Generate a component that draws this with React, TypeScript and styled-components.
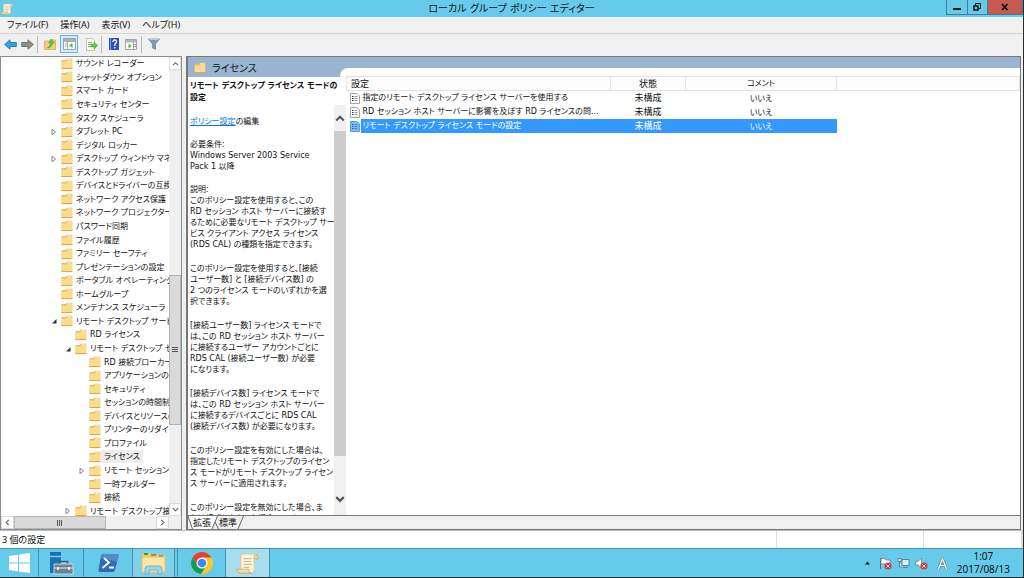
import React from "react";
import styled, { createGlobalStyle, css } from "styled-components";

const Global = createGlobalStyle`
  * { box-sizing: border-box; }
  html, body, #root { height: 100%; }
  body {
    margin: 0;
    overflow: hidden;
    background: #2b2b2b;
    color: #111;
    font: 8px/11px "DejaVu Sans", "Noto Sans CJK JP", sans-serif;
    font-feature-settings: "palt";
  }
  button, table { font: inherit; color: inherit; font-feature-settings: inherit; }
  button { border: 0; padding: 0; background: none; }
  svg { display: block; flex: none; }
`;

const wideFont = css`
  font-family: "Noto Sans", "Noto Sans CJK JP", sans-serif;
  font-size: 9px;
`;

const Desktop = styled.div`
  height: 100vh;
  display: flex;
  flex-direction: column;
  padding: 0 1px 1px 0;
`;

const TitleBar = styled.header`
  height: 17px;
  flex: none;
  display: grid;
  grid-template-columns: 77px 1fr 77px;
  background: #66cbea;
`;
const TitleIcon = styled.div`padding: 3px 1px;`;
const Title = styled.h1`
  margin: 0;
  font-size: 10px;
  line-height: 18px;
  font-weight: 400;
  text-align: center;
`;
const WindowButtons = styled.div`
  display: flex;
  height: 15px;
  border: 1px solid #3e7f96;
  border-top: 0;
`;
const WindowButton = styled.button<{ $close?: boolean }>`
  flex: ${(p) => (p.$close ? "0 0 34px" : "1")};
  display: grid;
  place-items: center;
  background: ${(p) => (p.$close ? "#c45a52" : "transparent")};
  border-right: ${(p) => (p.$close ? "0" : "1px solid #3e7f96")};
`;

const MenuBar = styled.nav`
  height: 17px;
  flex: none;
  display: flex;
  gap: 12px;
  padding: 0 7px;
  background: #f0f0f0;
  border-bottom: 1px solid #d5d5d5;
`;
const MenuButton = styled.button`
  ${wideFont}
  line-height: 16px;
`;

const ToolBar = styled.div`
  height: 22px;
  flex: none;
  display: flex;
  align-items: center;
  gap: 3px;
  padding: 0 3px 2px;
  background: #f0f0f0;
`;
const ToolButton = styled.button<{ $active?: boolean }>`
  width: ${(p) => (p.$active ? "18px" : "14px")};
  height: 18px;
  display: grid;
  place-items: center;
  ${(p) =>
    p.$active &&
    css`
      margin-right: 3px;
      background: #d3ebfa;
      outline: 1px solid #69b4e3;
      outline-offset: -1px;
    `}
`;
const ToolDivider = styled.span`
  width: 1px;
  height: 17px;
  margin-right: 2px;
  background: #b9b9b9;
`;

const Main = styled.main`
  flex: 1;
  min-height: 0;
  display: flex;
  gap: 4px;
  padding-right: 2px;
  background: #f0f0f0;
`;
const TreePane = styled.section`
  width: 182px;
  flex: none;
  display: grid;
  grid-template-columns: 1fr 12px;
  grid-template-rows: 1fr 13px;
  border: 1px solid #8c8e94;
  background: #f0f0f0;
`;
const TreeView = styled.div`
  min-height: 0;
  overflow: hidden;
  background: #fff;
`;
const TreeList = styled.ul`
  height: 461px;
  margin: 0;
  padding: 0;
  list-style: none;
  display: grid;
  grid-auto-rows: 1fr;
`;
const TreeItem = styled.li<{ $level: number }>`
  display: flex;
  align-items: center;
  padding-left: ${(p) => 35 + p.$level * 14}px;
  white-space: nowrap;
`;
const Expander = styled.span`
  width: 11px;
  flex: none;
  padding-left: 1px;
`;
const TreeLabel = styled.span<{ $selected?: boolean }>`
  padding: 0 3px;
  line-height: 13px;
  background: ${(p) => (p.$selected ? "#ededed" : "transparent")};
`;

const ScrollBar = styled.div<{ $horizontal?: boolean }>`
  min-height: 0;
  display: flex;
  flex-direction: ${(p) => (p.$horizontal ? "row" : "column")};
  background: #f0f0f0;
`;
const ScrollButton = styled.button`
  flex: 0 0 13px;
  display: grid;
  place-items: center;
  background: #fff;
  border: 1px solid #dcdcdc;
`;
const ScrollSpace = styled.div<{ $grow: number }>`flex: ${(p) => p.$grow} 1 0;`;
const ScrollThumb = styled.div<{ $grow: number }>`
  flex: ${(p) => p.$grow} 1 0;
  display: grid;
  place-items: center;
  background: #dadada;
  border: 1px solid #b5b5b5;
`;

const ResultPane = styled.section`
  flex: 1;
  min-width: 0;
  display: flex;
  flex-direction: column;
  border: 1px solid #777;
  border-width: 1px 1px 1px 2px;
  background: #fff;
`;
const ResultBody = styled.div`
  flex: 1;
  min-height: 0;
  display: grid;
  grid-template-columns: 152px 6px 1fr;
  grid-template-rows: 11px 9px 1fr;
  background: linear-gradient(#99b4d1 20px, #fff 20px);
`;
const PaneHeading = styled.h2`
  grid-column: 1;
  grid-row: 1 / 3;
  display: flex;
  align-items: center;
  gap: 6px;
  margin: 0;
  padding: 2px 0 0 6px;
  font-size: 10px;
  font-weight: 400;
`;
const Curve = styled.div`
  grid-column: 2 / 4;
  grid-row: 2;
  border-top-left-radius: 8px;
  background: #fff;
`;
const ListPane = styled.div`
  grid-column: 3;
  grid-row: 2 / 4;
  min-width: 0;
  padding-top: 8px;
`;
const Detail = styled.article`
  grid-column: 1 / 3;
  grid-row: 3;
  min-height: 0;
  display: flex;
  flex-direction: column;
`;
const DetailTitle = styled.h3`
  margin: 0;
  padding: 3px 0 1px 2px;
  font-size: 8px;
  line-height: 12px;
  font-weight: 700;
  white-space: nowrap;
`;
const DetailBody = styled.div`
  flex: 1;
  min-height: 0;
  display: grid;
  grid-template-columns: 1fr 12px;
`;
const DetailText = styled.div`
  min-height: 0;
  padding: 11px 0 0 2px;
  overflow: hidden;
  white-space: nowrap;
`;
const Paragraph = styled.p<{ $gap: number }>`
  margin: 0 0 ${(p) => p.$gap}px;
`;
const Link = styled.a`
  color: #0078d7;
`;
const FlatScroll = styled.div`
  display: flex;
  flex-direction: column;
  background: #f0f0f0;
`;
const FlatScrollButton = styled.button<{ $size: number }>`
  flex: 0 0 ${(p) => p.$size}px;
  display: grid;
  place-items: center;
`;
const FlatThumb = styled.div`
  flex: 324 1 0;
  background: #cdcdcd;
`;

const Table = styled.table`
  width: 100%;
  border-collapse: collapse;
  table-layout: fixed;
`;
const HeadCell = styled.th<{ $left?: boolean }>`
  height: 14px;
  padding: 0 4px;
  border: 1px solid #e3e3e3;
  background: #fcfcfc;
  font-weight: 400;
  text-align: ${(p) => (p.$left ? "left" : "center")};
`;
const Wide = styled.span`
  ${wideFont}
`;
const Row = styled.tr<{ $selected?: boolean }>`
  height: 14px;
  color: ${(p) => (p.$selected ? "#fff" : "inherit")};
`;
const Cell = styled.td<{ $selected?: boolean }>`
  padding: 0;
  text-align: center;
  background: ${(p) => (p.$selected ? "#3399ff" : "transparent")};
`;
const NameCell = styled.td`
  padding: 0 0 0 3px;
`;
const NameBox = styled.div`
  display: flex;
  align-items: center;
  gap: 1px;
`;
const NameText = styled.span<{ $selected?: boolean }>`
  flex: 1;
  padding-left: 2px;
  line-height: 14px;
  white-space: nowrap;
  background: ${(p) => (p.$selected ? "#3399ff" : "transparent")};
`;

const Tabs = styled.div`
  height: 14px;
  flex: none;
  display: flex;
  border-top: 1px solid #777;
  background: #f0f0f0;
`;
const Tab = styled.button<{ $active?: boolean }>`
  ${wideFont}
  line-height: 14px;
  background: ${(p) => (p.$active ? "#fff" : "transparent")};
`;

const StatusBar = styled.footer`
  ${wideFont}
  height: 18px;
  flex: none;
  display: grid;
  grid-template-columns: 1fr 147px 97px;
  border-top: 1px solid #bbb;
  border-right: 2px solid #ddd;
  background: #fff;
  line-height: 17px;
`;
const StatusCell = styled.div`
  padding-left: 2px;
  border-right: 1px solid #ddd;
`;

const TaskBar = styled.footer`
  height: 29px;
  flex: none;
  display: flex;
  border-top: 1px solid #4796b0;
  background: #66cbea;
`;
const TaskButton = styled.button<{ $width: number; $shade?: string }>`
  width: ${(p) => p.$width}px;
  display: grid;
  place-items: center;
  border-right: 1px solid #4391ab;
  background: ${(p) => p.$shade ?? "transparent"};
`;
const TaskEdge = styled.span`
  width: 3px;
  border-right: 1px solid #4391ab;
`;
const Tray = styled.div`
  margin-left: auto;
  display: flex;
  align-items: center;
  gap: 5px;
  padding-right: 13px;
`;
const TrayButton = styled.button<{ $spaced?: boolean }>`
  margin: 0 ${(p) => (p.$spaced ? "4px" : "0")};
`;
const Clock = styled.time`
  ${wideFont}
  text-align: center;
  font-size: 10px;
  line-height: 13px;
`;

const Folder = ({ size = 12 }: { size?: number }) => (
  <svg width={size} height={size} viewBox="0 0 12 12">
    <path d="M.5 2h4l1-1.3h5.8V11H.5z" fill="#e9bd5e" />
    <path d="M6 1.4h4.6v1.2H6z" fill="#fff6d8" />
    <path d="M.9 3.4h4.6l1-.8h4.6v8H.9z" fill="#fbdc8d" />
    <path d="M.5 10.6h10.8" stroke="#d9a743" />
  </svg>
);

const Chevron = ({ dir, heavy }: { dir: "up" | "down" | "left" | "right"; heavy?: boolean }) => {
  const d = { up: "M1 6l3-3 3 3", down: "M1 2.500l3 3 3-3", left: "M5.500 1l-3 3 3 3", right: "M2.500 1l3 3-3 3" }[dir];
  const s = heavy ? 10 : 7;
  return (
    <svg width={s} height={s} viewBox="0 0 8 8" fill="none" stroke="#555" strokeWidth={heavy ? 1.7 : 1.2}>
      <path d={d} />
    </svg>
  );
};

const Scroll = ({ size = 12 }: { size?: number }) => (
  <svg width={size} height={size} viewBox="0 0 24 24">
    <path d="M6 2h14q3 0 3 3v2h-4v12q0 3-3 3H3q-2-1-2-4h4V5q0-2 1-3z" fill="#fbf3d8" stroke="#d6c594" />
    <path d="M19 7V4q1-2 3-1l1 4zM1 18h12q0 3 3 4H4q-3-1-3-4z" fill="#ecdcae" stroke="#c7b27a" />
    <path d="M8 7h8M8 10h8M8 13h8M8 16h6" stroke="#c4b588" />
  </svg>
);

const PolicyIcon = ({ selected }: { selected?: boolean }) => (
  <svg width="10" height="11" viewBox="0 0 10 11">
    <path d="M.5.5h6.500l2.500 2.500v7.500h-9z" fill={selected ? "#7cbcf5" : "#fafafa"} stroke={selected ? "#5a9bd8" : "#a5a5a5"} />
    <path d="M2 3.500h1.500M2 5.500h1.500M2 7.500h1.500" stroke={selected ? "#1c60a8" : "#333"} />
    <path d="M4.500 3.500h3M4.500 5.500h3M4.500 7.500h3" stroke={selected ? "#3f86cb" : "#999"} />
  </svg>
);

type Node = [label: string, level: number, state?: "closed" | "open" | "selected"];
const nodes: Node[] = [
  ["サウンド レコーダー", 1],
  ["シャットダウン オプション", 1],
  ["スマート カード", 1],
  ["セキュリティ センター", 1],
  ["タスク スケジューラ", 1],
  ["タブレット PC", 1, "closed"],
  ["デジタル ロッカー", 1],
  ["デスクトップ ウィンドウ マネージャー", 1, "closed"],
  ["デスクトップ ガジェット", 1],
  ["デバイスとドライバーの互換性", 1],
  ["ネットワーク アクセス保護", 1],
  ["ネットワーク プロジェクター", 1],
  ["パスワード同期", 1],
  ["ファイル履歴", 1],
  ["ファミリー セーフティ", 1],
  ["プレゼンテーションの設定", 1],
  ["ポータブル オペレーティング システム", 1],
  ["ホームグループ", 1],
  ["メンテナンス スケジューラ", 1],
  ["リモート デスクトップ サービス", 1, "open"],
  ["RD ライセンス", 2],
  ["リモート デスクトップ セッション ホスト", 2, "open"],
  ["RD 接続ブローカー", 3],
  ["アプリケーションの互換性", 3],
  ["セキュリティ", 3],
  ["セッションの時間制限", 3],
  ["デバイスとリソースのリダイレクト", 3],
  ["プリンターのリダイレクト", 3],
  ["プロファイル", 3],
  ["ライセンス", 3, "selected"],
  ["リモート セッション環境", 3, "closed"],
  ["一時フォルダー", 3],
  ["接続", 3],
  ["リモート デスクトップ接続", 2, "closed"],
];

const paragraphs: string[][] = [
  ["このポリシー設定を使用すると、この", "RD セッション ホスト サーバーに接続す", "るために必要なリモート デスクトップ サー", "ビス クライアント アクセス ライセンス", "(RDS CAL) の種類を指定できます。"],
  ["このポリシー設定を使用すると、[接続", "ユーザー数] と [接続デバイス数] の", "2 つのライセンス モードのいずれかを選", "択できます。"],
  ["[接続ユーザー数] ライセンス モードで", "は、この RD セッション ホスト サーバー", "に接続するユーザー アカウントごとに", "RDS CAL (接続ユーザー数) が必要", "になります。"],
  ["[接続デバイス数] ライセンス モードで", "は、この RD セッション ホスト サーバー", "に接続するデバイスごとに RDS CAL", "(接続デバイス数) が必要になります。"],
  ["このポリシー設定を有効にした場合は、", "指定したリモート デスクトップのライセン", "ス モードがリモート デスクトップ ライセン", "ス サーバーに適用されます。"],
  ["このポリシー設定を無効にした場合、ま", "たは構成しなかった場合、ライセンス"],
];

const Lines = ({ lines }: { lines: string[] }) => (
  <>
    {lines.map((line, i) => (
      <React.Fragment key={line}>
        {i > 0 && <br />}
        {line}
      </React.Fragment>
    ))}
  </>
);

const policies = [
  "指定のリモート デスクトップ ライセンス サーバーを使用する",
  "RD セッション ホスト サーバーに影響を及ぼす RD ライセンスの問...",
  "リモート デスクトップ ライセンス モードの設定",
];

export default function App() {
  return (
    <Desktop>
      <Global />
      <TitleBar>
        <TitleIcon><Scroll /></TitleIcon>
        <Title>ローカル グループ ポリシー エディター</Title>
        <WindowButtons>
          <WindowButton aria-label="最小化">
            <svg width="8" height="8"><path d="M0 6h8" stroke="#111" strokeWidth="2" /></svg>
          </WindowButton>
          <WindowButton aria-label="元に戻す">
            <svg width="8" height="8" fill="none" stroke="#111"><path d="M2.500 2V.5h5v5H6" /><path d="M1 3h4v4H1z" strokeWidth="1.500" /></svg>
          </WindowButton>
          <WindowButton $close aria-label="閉じる">
            <svg width="8" height="8"><path d="M1 1l5.500 6M6.500 1L1 7" stroke="#111" strokeWidth="1.800" /></svg>
          </WindowButton>
        </WindowButtons>
      </TitleBar>
      <MenuBar>
        {["ファイル(F)", "操作(A)", "表示(V)", "ヘルプ(H)"].map((m) => <MenuButton key={m}>{m}</MenuButton>)}
      </MenuBar>
      <ToolBar>
        <ToolButton aria-label="戻る">
          <svg width="13" height="11" viewBox="0 0 13 11"><path d="M.7 5.500L6 .8v2.700h6.300v4H6v2.700z" fill="#35a5e5" stroke="#1e7fc0" /></svg>
        </ToolButton>
        <ToolButton aria-label="進む">
          <svg width="13" height="11" viewBox="0 0 13 11"><path d="M12.300 5.500L7 .8v2.700H.7v4H7v2.700z" fill="#909090" stroke="#737373" /></svg>
        </ToolButton>
        <ToolDivider />
        <ToolButton aria-label="上へ">
          <svg width="12" height="12" viewBox="0 0 12 12"><path d="M.5 3h4l1-1h6v9.500H.5z" fill="#f4cf78" stroke="#dcb765" /><path d="M3 10q3-1 3.500-5H4.500L7.500 1l3 4H8.500q-.5 5-5.500 5z" fill="#5cc24a" stroke="#3e9a32" strokeWidth=".5" /></svg>
        </ToolButton>
        <ToolButton $active aria-label="コンソール ツリーの表示">
          <svg width="13" height="12" viewBox="0 0 13 12"><path d="M.5.5h12v11H.5z" fill="#fff" stroke="#9aa6b2" /><path d="M1 1h11v3H1z" fill="#a5b0bb" /><path d="M4.500 4v7" stroke="#9aa6b2" /><path d="M2 6h1.500M2 8h1.500" stroke="#6f93b5" /><path d="M9.500 5v5L6 7.500z" fill="#4fb840" /></svg>
        </ToolButton>
        <ToolButton aria-label="一覧のエクスポート">
          <svg width="13" height="13" viewBox="0 0 13 13"><path d="M1.500.5h6l2 2v10h-8z" fill="#fffbe9" stroke="#c9c1a8" /><path d="M3 4.500h4M3 6.500h3M3 8.500h4" stroke="#999" /><path d="M6 6h3V4l3.700 3.500L9 11V9H6z" fill="#5cc94a" stroke="#46a83a" strokeWidth=".5" /></svg>
        </ToolButton>
        <ToolDivider />
        <ToolButton aria-label="ヘルプ">
          <svg width="10" height="12" viewBox="0 0 10 12"><path d="M0 0h10v12H0z" fill="#2c4fb8" /><path d="M1.500 0v12" stroke="#7b95e3" /><path d="M4 4q0-2 1.700-2 1.800 0 1.800 1.700Q7.500 5 5.800 6.200V8M5.800 9v1.400" stroke="#fff" strokeWidth="1.300" fill="none" /></svg>
        </ToolButton>
        <ToolButton aria-label="操作ウィンドウの表示">
          <svg width="12" height="11" viewBox="0 0 12 11"><path d="M.5.5h11v10H.5z" fill="#fff" stroke="#9ea5ac" /><path d="M1 1h10v2.500H1z" fill="#b0b6bc" /><path d="M8.500 3.500V10" stroke="#9ea5ac" /><path d="M9.500 5.500H11M9.500 7.500H11" stroke="#777" /><path d="M3.500 4.500v5l3-2.500z" fill="#4fb840" /></svg>
        </ToolButton>
        <ToolDivider />
        <ToolButton aria-label="フィルター">
          <svg width="12" height="12" viewBox="0 0 12 12"><path d="M.5 1h11L7.500 6v5.500l-3-1.500V6z" fill="#7f9bb3" stroke="#668199" strokeWidth=".7" /><path d="M1.500 1.500h9" stroke="#b9cbdb" /></svg>
        </ToolButton>
      </ToolBar>
      <Main>
        <TreePane>
          <TreeView>
            <TreeList>
              {nodes.map(([label, level, state]) => (
                <TreeItem key={label} $level={level}>
                  <Expander>
                    {state === "closed" && <svg width="6" height="8"><path d="M1 1.200v5.600L4.500 4z" fill="#fff" stroke="#777" strokeWidth=".9" /></svg>}
                    {state === "open" && <svg width="6" height="8"><path d="M5.500 2v4.500H1z" fill="#333" /></svg>}
                  </Expander>
                  <Folder />
                  <TreeLabel $selected={state === "selected"}>{label}</TreeLabel>
                </TreeItem>
              ))}
            </TreeList>
          </TreeView>
          <ScrollBar>
            <ScrollButton aria-label="上へスクロール"><Chevron dir="up" /></ScrollButton>
            <ScrollSpace $grow={206} />
            <ScrollThumb $grow={149}>
              <svg width="6" height="6"><path d="M0 .5h6M0 2.500h6M0 4.500h6" stroke="#555" /></svg>
            </ScrollThumb>
            <ScrollSpace $grow={78} />
            <ScrollButton aria-label="下へスクロール"><Chevron dir="down" /></ScrollButton>
          </ScrollBar>
          <ScrollBar $horizontal>
            <ScrollButton aria-label="左へスクロール"><Chevron dir="left" /></ScrollButton>
            <ScrollThumb $grow={91}>
              <svg width="6" height="6"><path d="M.5 0v6M2.500 0v6M4.500 0v6" stroke="#555" /></svg>
            </ScrollThumb>
            <ScrollSpace $grow={51} />
            <ScrollButton aria-label="右へスクロール"><Chevron dir="right" /></ScrollButton>
          </ScrollBar>
        </TreePane>
        <ResultPane>
          <ResultBody>
            <PaneHeading><Folder />ライセンス</PaneHeading>
            <Curve />
            <Detail>
              <DetailTitle><Lines lines={["リモート デスクトップ ライセンス モードの", "設定"]} /></DetailTitle>
              <DetailBody>
                <DetailText>
                  <Paragraph $gap={12}><Link href="#edit">ポリシー設定</Link>の編集</Paragraph>
                  <Paragraph $gap={12}><Lines lines={["必要条件:", "Windows Server 2003 Service", "Pack 1 以降"]} /></Paragraph>
                  <Paragraph $gap={0}>説明:</Paragraph>
                  {paragraphs.map((lines) => <Paragraph $gap={13} key={lines[0] + lines[1]}><Lines lines={lines} /></Paragraph>)}
                </DetailText>
                <FlatScroll>
                  <FlatScrollButton $size={26} aria-label="説明を上へ"><Chevron dir="up" heavy /></FlatScrollButton>
                  <FlatThumb />
                  <ScrollSpace $grow={27} />
                  <FlatScrollButton $size={32} aria-label="説明を下へ"><Chevron dir="down" heavy /></FlatScrollButton>
                </FlatScroll>
              </DetailBody>
            </Detail>
            <ListPane>
              <Table>
                <colgroup>
                  <col style={{ width: 264 }} />
                  <col style={{ width: 75 }} />
                  <col style={{ width: 151 }} />
                  <col />
                </colgroup>
                <thead>
                  <tr>
                    <HeadCell $left><Wide>設定</Wide></HeadCell>
                    <HeadCell><Wide>状態</Wide></HeadCell>
                    <HeadCell>コメント</HeadCell>
                    <HeadCell as="td" />
                  </tr>
                </thead>
                <tbody>
                  {policies.map((name, i) => {
                    const selected = i === 2;
                    return (
                      <Row key={name} $selected={selected}>
                        <NameCell>
                          <NameBox>
                            <PolicyIcon selected={selected} />
                            <NameText $selected={selected}>{name}</NameText>
                          </NameBox>
                        </NameCell>
                        <Cell $selected={selected}><Wide>未構成</Wide></Cell>
                        <Cell $selected={selected}>いいえ</Cell>
                        <td />
                      </Row>
                    );
                  })}
                </tbody>
              </Table>
            </ListPane>
          </ResultBody>
          <Tabs>
            <svg width="5" height="13"><path d="M0 0l5 13V0z" fill="#fff" /><path d="M0 0l4.500 13" stroke="#666" /></svg>
            <Tab $active>拡張</Tab>
            <svg width="8" height="13" fill="none"><path d="M0 0h6L1 13H0z" fill="#fff" /><path d="M6.500 0L1 13M4 6l3.500 7" stroke="#666" /></svg>
            <Tab>標準</Tab>
            <svg width="7" height="13"><path d="M6.500 0L1 13" stroke="#666" /></svg>
          </Tabs>
        </ResultPane>
      </Main>
      <StatusBar>
        <StatusCell>3 個の設定</StatusCell>
        <StatusCell />
        <div />
      </StatusBar>
      <TaskBar>
        <TaskButton $width={39} aria-label="スタート">
          <svg width="21" height="20" viewBox="0 0 21 20" fill="#fff"><path d="M0 3l9-1.300v7.800H0zM10 1.500L21 0v9.500H10zM0 10.500h9v7.800L0 17zM10 10.500h11V20l-11-1.500z" /></svg>
        </TaskButton>
        <TaskButton $width={45} aria-label="サーバー マネージャー">
          <svg width="26" height="24" viewBox="0 0 26 24"><path d="M2 1h11v21H2z" fill="#1672b8" /><path d="M2 5.500h11" stroke="#83c8ef" strokeWidth="1.500" /><path d="M11.500 13V10.500h8V13" fill="none" stroke="#485a66" strokeWidth="1.500" /><path d="M6 13h19v10H6z" fill="#6c8290" stroke="#dbe9f0" strokeWidth=".8" /><path d="M6 17h19" stroke="#dbe9f0" /><path d="M10 16v3M21 16v3" stroke="#fff" strokeWidth="1.500" /></svg>
        </TaskButton>
        <TaskButton $width={49} aria-label="PowerShell">
          <svg width="21" height="18" viewBox="0 0 21 18"><path d="M5 0h14q2 0 1.500 2L17 16q-.5 2-2.500 2H2q-2 0-1.500-2L3 2q.5-2 2-2z" fill="#2f6cae" /><path d="M5 0h14q2 0 1.500 2L19 8 3 4l.5-2Q4 0 5 0z" fill="#4f8dc6" /><path d="M6 4l5 4.500L4.500 14M11 13.500h5" fill="none" stroke="#fff" strokeWidth="1.800" /></svg>
        </TaskButton>
        <TaskButton $width={42} $shade="#7fd1ea" aria-label="エクスプローラー">
          <svg width="25" height="23" viewBox="0 0 25 23"><path d="M1 3q0-2 2-2h5l2 2h13q1 0 1 1v17H1z" fill="#efc969" /><path d="M3 2h4" stroke="#36a33c" strokeWidth="2" /><path d="M10 3h5M18 4h4" stroke="#d9533d" strokeWidth="1.500" /><path d="M1 5h23v15H1z" fill="#fae7a8" stroke="#e3c06a" /><path d="M4 22v-5q0-3 3-3h11q3 0 3 3v5h-4v-4H8v4z" fill="#9bd7ee" stroke="#6ab3d4" /></svg>
        </TaskButton>
        <TaskEdge />
        <TaskButton $width={48} aria-label="Chrome">
          <svg width="22" height="22" viewBox="0 0 22 22"><circle cx="11" cy="11" r="11" fill="#f8c928" /><path d="M1.500 5.500A11 11 0 0 1 20.500 5.500H11L6.500 13.500z" fill="#db4437" /><path d="M1.500 5.500A11 11 0 0 0 10 22l5.500-8.500H7z" fill="#169c58" /><circle cx="11" cy="11" r="5.500" fill="#fff" /><circle cx="11" cy="11" r="4.300" fill="#4285f4" /></svg>
        </TaskButton>
        <TaskButton $width={44} $shade="#a6def0" aria-label="ローカル グループ ポリシー エディター"><Scroll size={23} /></TaskButton>
        <Tray>
          <TrayButton $spaced aria-label="隠れているアイコン"><svg width="5" height="4"><path d="M0 3.500L2.500.5 5 3.500z" fill="#111" /></svg></TrayButton>
          <TrayButton aria-label="アクション センター">
            <svg width="13" height="13" viewBox="0 0 13 13"><path d="M1.500 1v11" stroke="#667" /><path d="M2 1.500h4l1 1.500h4v5H7L6 7H2z" fill="#fff" stroke="#778" strokeWidth=".8" /><circle cx="9" cy="9" r="3.600" fill="#d83b35" /><path d="M7.500 7.500l3 3M10.500 7.500l-3 3" stroke="#fff" /></svg>
          </TrayButton>
          <TrayButton aria-label="ネットワーク">
            <svg width="13" height="12" viewBox="0 0 13 12" fill="none" stroke="#667f8a"><path d="M5 2.500h7v6H5zM6 10.500h5" fill="#d7eef6" /><path d="M1 1.500h3v3H1zM2.500 5v5H5" fill="#eef8fb" /></svg>
          </TrayButton>
          <TrayButton aria-label="音量">
            <svg width="13" height="13" viewBox="0 0 13 13"><path d="M.5 4.500H3L6.500 1v10L3 8H.5z" fill="#fff" stroke="#778" strokeWidth=".8" /><circle cx="9" cy="9" r="3.600" fill="#d83b35" /><path d="M7.500 7.500l3 3M10.500 7.500l-3 3" stroke="#fff" /></svg>
          </TrayButton>
          <TrayButton $spaced aria-label="入力モード">
            <svg width="11" height="13" viewBox="0 0 11 13" fill="none" stroke="#6b7f88" strokeWidth="2.600"><path d="M1.500 12L5.500 1.500 9.500 12M3 8.500h5" /><path d="M1.500 12L5.500 1.500 9.500 12M3 8.500h5" stroke="#fff" strokeWidth="1.200" /></svg>
          </TrayButton>
          <Clock>1:07<br />2017/08/13</Clock>
        </Tray>
      </TaskBar>
    </Desktop>
  );
}
